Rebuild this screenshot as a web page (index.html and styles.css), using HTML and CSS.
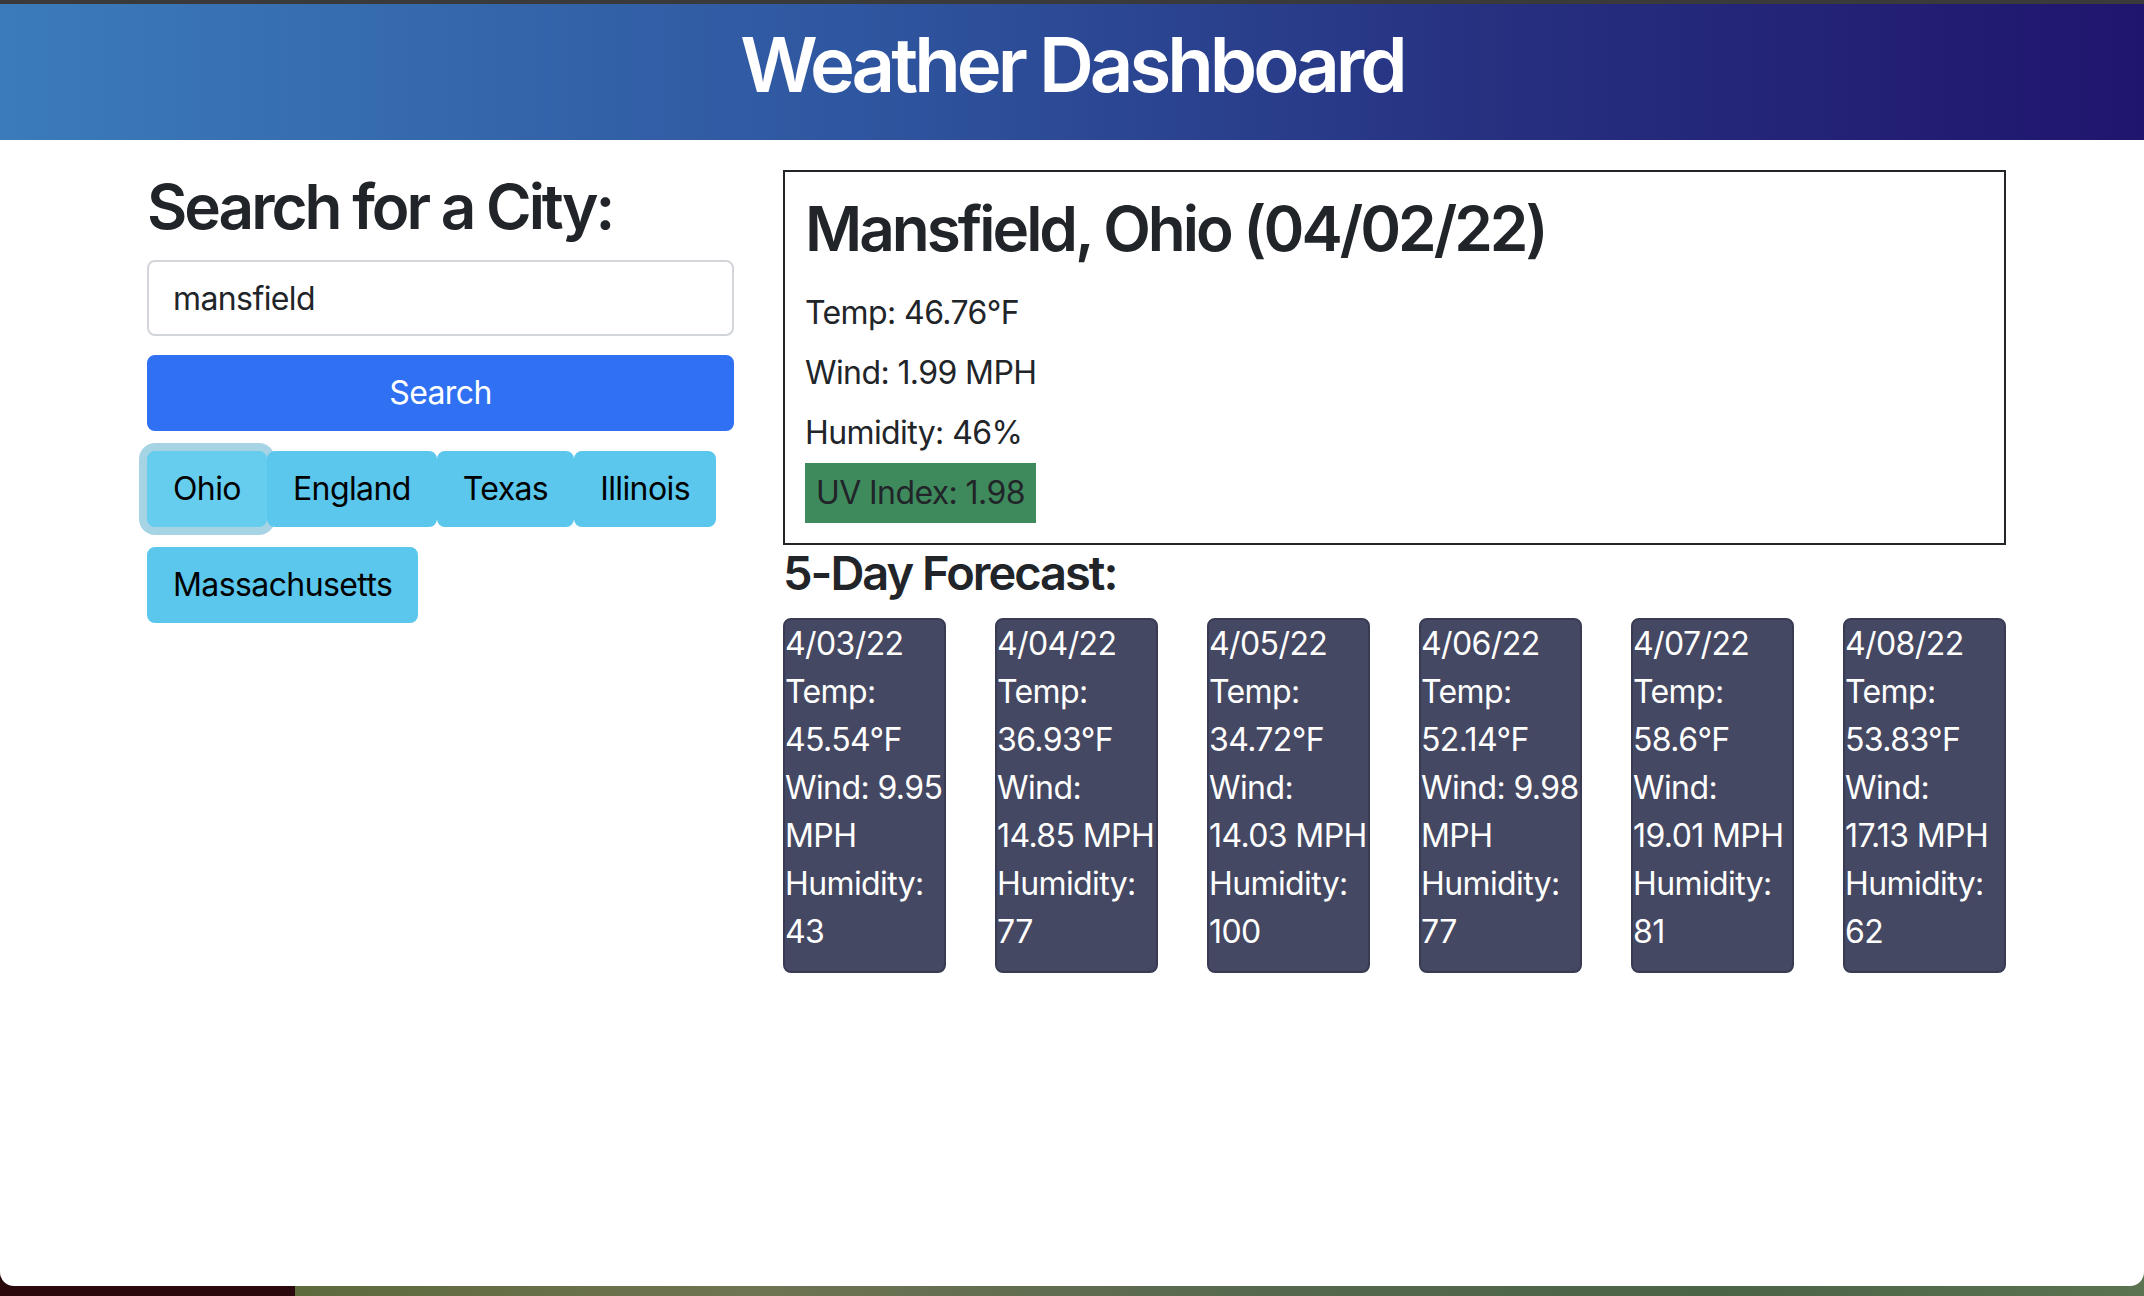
FILE: index.html
```html
<!DOCTYPE html>
<html lang="en">
<head>
<meta charset="utf-8">
<title>Weather Dashboard</title>
<link rel="stylesheet" href="styles.css">
</head>
<body>
<div class="window">
  <header class="site-header">
    <h1 class="site-title">Weather Dashboard</h1>
  </header>
  <main class="layout">
    <section class="search-panel">
      <h2 class="panel-title">Search for a City:</h2>
      <input class="city-input" type="text" value="mansfield">
      <button class="search-btn" type="button">Search</button>
      <div class="history">
        <button class="history-btn is-focused" type="button">Ohio</button>
        <button class="history-btn" type="button">England</button>
        <button class="history-btn" type="button">Texas</button>
        <button class="history-btn" type="button">Illinois</button>
        <button class="history-btn" type="button">Massachusetts</button>
      </div>
    </section>
    <section class="weather-panel">
      <div class="current">
        <h2 class="current-title">Mansfield, Ohio (04/02/22)</h2>
        <p class="stat">Temp: 46.76°F</p>
        <p class="stat">Wind: 1.99 MPH</p>
        <p class="stat">Humidity: 46%</p>
        <p class="stat uv">UV Index: 1.98</p>
      </div>
      <h4 class="forecast-title">5-Day Forecast:</h4>
      <div class="forecast">
        <div class="day"><p>4/03/22</p><p>Temp: 45.54°F</p><p>Wind: 9.95 MPH</p><p>Humidity: 43</p></div>
        <div class="day"><p>4/04/22</p><p>Temp: 36.93°F</p><p>Wind: 14.85 MPH</p><p>Humidity: 77</p></div>
        <div class="day"><p>4/05/22</p><p>Temp: 34.72°F</p><p>Wind: 14.03 MPH</p><p>Humidity: 100</p></div>
        <div class="day"><p>4/06/22</p><p>Temp: 52.14°F</p><p>Wind: 9.98 MPH</p><p>Humidity: 77</p></div>
        <div class="day"><p>4/07/22</p><p>Temp: 58.6°F</p><p>Wind: 19.01 MPH</p><p>Humidity: 81</p></div>
        <div class="day"><p>4/08/22</p><p>Temp: 53.83°F</p><p>Wind: 17.13&nbsp;MPH</p><p>Humidity: 62</p></div>
      </div>
    </section>
  </main>
</div>
</body>
</html>
```
FILE: styles.css
```css
* {
  box-sizing: border-box;
}

html {
  background: linear-gradient(90deg, #2a080b 0, #2a080b 295px, #5e6a3c 295px, #6f7452 35%, #55684e 60%, #4c6446 80%, #5b7350 100%);
}

body {
  margin: 0;
  font-family: Inter, "Noto Sans", sans-serif;
  letter-spacing: -0.6px;
  color: #212529;
}

.window {
  height: 1286px;
  background: #fff;
  border-top: 4px solid #3a3a3a;
  border-radius: 0 0 14px 14px;
  overflow: hidden;
}

.site-header {
  height: 136px;
  padding: 15px 0;
  text-align: center;
  background: linear-gradient(90deg, #3b7bbb 0%, #2f56a0 40%, #26307f 70%, #20156e 100%);
}

.site-title {
  margin: 0;
  font-size: 76px;
  line-height: 1.2;
  font-weight: 600;
  letter-spacing: -4px;
  color: #fff;
}

.layout {
  display: flex;
  gap: 49px;
  padding: 30px 0 0 147px;
}

.search-panel {
  width: 587px;
}

.panel-title,
.current-title {
  margin: 0 0 16px;
  font-size: 62px;
  line-height: 1.2;
  font-weight: 600;
  letter-spacing: -3px;
}

.city-input {
  display: block;
  width: 100%;
  height: 76px;
  margin: 0 0 19px;
  padding: 12px 24px;
  font-family: inherit;
  font-size: 32px;
  line-height: 48px;
  letter-spacing: inherit;
  color: #212529;
  background: #fff;
  border: 2px solid #d2d6db;
  border-radius: 8px;
}

.search-btn {
  display: block;
  width: 100%;
  height: 76px;
  margin: 0 0 20px;
  font-family: inherit;
  font-size: 32px;
  line-height: 48px;
  letter-spacing: inherit;
  color: #fff;
  background: #2f71f2;
  border: 2px solid #2f71f2;
  border-radius: 8px;
}

.history {
  display: flex;
  flex-wrap: wrap;
  row-gap: 20px;
}

.history-btn {
  height: 76px;
  margin: 0;
  padding: 12px 24px;
  font-family: inherit;
  font-size: 32px;
  line-height: 48px;
  letter-spacing: inherit;
  color: #000;
  background: #5bc7ec;
  border: 2px solid #5bc7ec;
  border-radius: 8px;
}

.history-btn.is-focused {
  background: #66cdee;
  border-color: #66cdee;
  box-shadow: 0 0 0 8px #a7d4e4;
}

.weather-panel {
  width: 1223px;
}

.current {
  border: 2px solid #212529;
  padding: 20px;
}

.current-title {
  margin-bottom: 17px;
}

.stat {
  margin: 0;
  padding: 6px 0;
  font-size: 32px;
  line-height: 48px;
}

.uv {
  width: fit-content;
  padding: 6px 11px;
  background: #3f8a5c;
}

.forecast-title {
  margin: 0 0 16px;
  font-size: 47px;
  line-height: 1.2;
  font-weight: 600;
  letter-spacing: -2px;
}

.forecast {
  display: flex;
  justify-content: space-between;
  align-items: flex-start;
}

.day {
  width: 163px;
  padding-bottom: 15px;
  color: #fff;
  background: #454862;
  border: 2px solid #393b52;
  border-radius: 8px;
}

.day p {
  margin: 0;
  font-size: 32px;
  line-height: 48px;
}
```
